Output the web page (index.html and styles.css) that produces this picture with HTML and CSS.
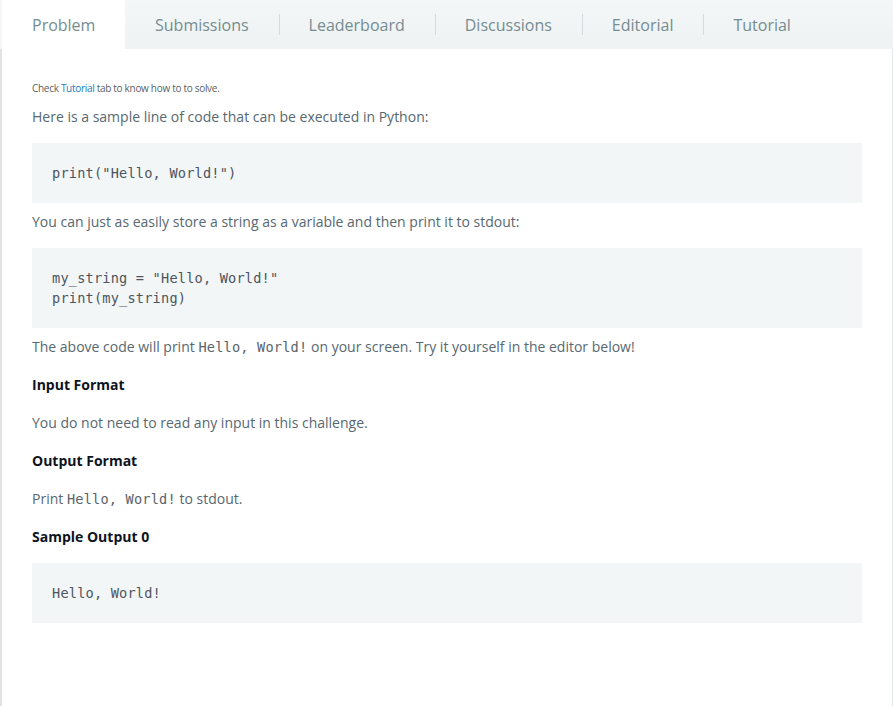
FILE: index.html
```html
<!DOCTYPE html>
<html>
<head>
<meta charset="utf-8">
<link rel="stylesheet" href="styles.css">
</head>
<body>
<div class="page">
  <nav class="tabs">
    <div class="tab active">Problem</div>
    <div class="tab">Submissions</div>
    <div class="tab sep">Leaderboard</div>
    <div class="tab sep">Discussions</div>
    <div class="tab sep">Editorial</div>
    <div class="tab sep">Tutorial</div>
  </nav>
  <main class="content">
    <p class="note">Check <a class="link">Tutorial</a> tab to know how to to solve.</p>
    <p>Here is a sample line of code that can be executed in Python:</p>
    <pre class="code">print("Hello, World!")</pre>
    <p>You can just as easily store a string as a variable and then print it to stdout:</p>
    <pre class="code">my_string = "Hello, World!"
print(my_string)</pre>
    <p>The above code will print <code class="inline">Hello, World!</code> on your screen. Try it yourself in the editor below!</p>
    <h4 class="heading">Input Format</h4>
    <p>You do not need to read any input in this challenge.</p>
    <h4 class="heading">Output Format</h4>
    <p>Print <code class="inline">Hello, World!</code> to stdout.</p>
    <h4 class="heading">Sample Output 0</h4>
    <pre class="code sample">Hello, World!</pre>
  </main>
</div>
</body>
</html>
```
FILE: styles.css
```css
html, body {
  margin: 0;
  padding: 0;
  background: #ffffff;
}
body {
  font-family: "Open Sans", "Noto Sans", sans-serif;
}
.page {
  width: 893px;
  height: 706px;
  display: flex;
  flex-direction: column;
}
.tabs {
  display: flex;
  height: 49px;
  align-items: center;
  background: linear-gradient(#f4f7f8, #eef2f3);
  border-left: 2px solid #f4f6f7;
  flex-shrink: 0;
}
.tab {
  font-size: 16px;
  color: #768c91;
  padding: 0 30px;
  height: 49px;
  display: flex;
  align-items: center;
  position: relative;
}
.tab.active {
  background: #ffffff;
  width: 63px;
}
.tab.sep::before {
  content: "";
  position: absolute;
  left: 0;
  top: 14px;
  height: 21px;
  width: 1px;
  background: #d5dadc;
}
.content {
  flex: 1;
  border-left: 2px solid #dfe3e5;
  border-right: 1px solid #e3e6e8;
  padding: 32px 30px 0 30px;
  color: #576871;
  font-size: 14px;
  line-height: 22px;
}
.content p {
  margin: 0 0 15px 0;
}
.content p.note {
  font-size: 10px;
  line-height: 14px;
  letter-spacing: -0.3px;
  margin-bottom: 11px;
  color: #5b5f63;
}
.link {
  color: #1b7bbc;
}
.code {
  margin: 0 0 8px 0;
  background: #f3f6f7;
  padding: 20px 20px;
  font-family: "DejaVu Sans Mono", "Liberation Mono", monospace;
  font-size: 13.6px;
  letter-spacing: 0.2px;
  line-height: 20px;
  color: #4c555e;
}
.code.sample {
  margin-top: -1px;
}
.inline {
  font-family: "DejaVu Sans Mono", "Liberation Mono", monospace;
  font-size: 13.6px;
  letter-spacing: 0.2px;
  color: #5a636b;
}
.heading {
  margin: 0 0 16px 0;
  padding-top: 1px;
  font-size: 14px;
  line-height: 22px;
  font-weight: 700;
  color: #0e141e;
}
```
